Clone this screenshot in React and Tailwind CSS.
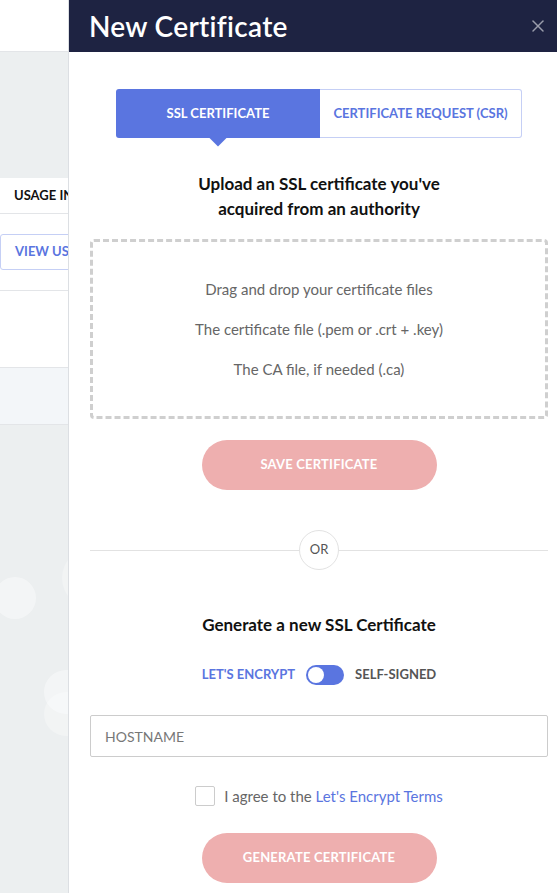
import { X } from "lucide-react";

function Background() {
  return (
    <div className="relative w-[68px] shrink-0 overflow-hidden bg-[#eceff0]">
      <div className="h-[52px] border-b border-[#e3e5e8] bg-white" />
      <div className="h-[126px]" />
      <div className="bg-white">
        <div className="flex h-[36px] items-center border-b border-[#e3e5e8] pl-[14px] text-[13px] font-bold whitespace-nowrap text-[#111]">
          USAGE INFO
        </div>
        <div className="flex h-[77px] items-center border-b border-[#e3e5e8]">
          <div className="flex h-[36px] items-center rounded-l-[3px] border border-[#c5cff5] pl-[14px] text-[13px] font-bold whitespace-nowrap text-[#5a75e0]">
            VIEW USAGE
          </div>
        </div>
        <div className="h-[77px] border-b border-[#e3e5e8]" />
      </div>
      <div className="h-[57px] border-b border-[#e3e5e8] bg-[#f3f6f9]" />
      <div className="absolute top-[577px] left-[-6px] h-[42px] w-[42px] rounded-full bg-white/40" />
      <div className="absolute top-[548px] left-[62px] h-[60px] w-[60px] rounded-full bg-white/30" />
      <div className="absolute top-[670px] left-[44px] h-[44px] w-[44px] rounded-full bg-white/40" />
      <div className="absolute top-[692px] left-[44px] h-[44px] w-[44px] rounded-full bg-white/30" />
    </div>
  );
}

function PinkButton({ children }) {
  return (
    <button className="h-[50px] w-[235px] rounded-full bg-[#eeafaf] text-[13px] font-bold tracking-[0.2px] text-white">
      {children}
    </button>
  );
}

export default function App() {
  return (
    <div
      className="flex h-[893px] w-full overflow-hidden"
      style={{ fontFamily: "Lato, 'Open Sans', sans-serif" }}
    >
      <Background />
      <div className="flex min-w-0 flex-1 flex-col border-l border-[#dcdfe3] bg-white">
        <div className="flex h-[52px] shrink-0 items-center justify-between bg-[#1e2342] pr-[9px] pl-[20px]">
          <h1 className="text-[28px] font-semibold tracking-[0.3px] text-white">New Certificate</h1>
          <X className="h-[20px] w-[20px] text-[#9a9dab]" strokeWidth={1.8} />
        </div>

        <div className="flex flex-col items-center pr-[9px] pl-[21px]">
          <div className="mt-[37px] flex h-[49px] w-[406px]">
            <div className="relative flex w-[204px] items-center justify-center rounded-l-[3px] bg-[#5a75e0] text-[13px] font-bold text-white">
              SSL CERTIFICATE
              <div className="absolute -bottom-[6px] left-1/2 h-[12px] w-[12px] -translate-x-1/2 rotate-45 bg-[#5a75e0]" />
            </div>
            <div className="flex flex-1 items-center justify-center rounded-r-[3px] border border-l-0 border-[#c5cff5] text-[13px] font-bold text-[#5a75e0]">
              CERTIFICATE REQUEST (CSR)
            </div>
          </div>

          <h2 className="mt-[33px] text-center text-[17px] leading-[25px] font-bold text-[#111]">
            Upload an SSL certificate you've
            <br />
            acquired from an authority
          </h2>

          <div className="mt-[18px] flex h-[180px] w-full flex-col items-center justify-center gap-[18px] rounded-[4px] border-[3px] border-dashed border-[#cfcfcf] text-[15px] leading-[22px] text-[#666]">
            <p>Drag and drop your certificate files</p>
            <p>The certificate file (.pem or .crt + .key)</p>
            <p>The CA file, if needed (.ca)</p>
          </div>

          <div className="mt-[21px]">
            <PinkButton>SAVE CERTIFICATE</PinkButton>
          </div>

          <div className="mt-[40px] flex w-full items-center">
            <div className="h-px flex-1 bg-[#e2e2e2]" />
            <div className="flex h-[40px] w-[40px] items-center justify-center rounded-full border border-[#e2e2e2] text-[13px] text-[#555]">
              OR
            </div>
            <div className="h-px flex-1 bg-[#e2e2e2]" />
          </div>

          <h2 className="mt-[42px] text-[17px] leading-[25px] font-bold text-[#111]">
            Generate a new SSL Certificate
          </h2>

          <div className="mt-[28px] flex items-center gap-[11px] text-[13px] font-bold">
            <span className="text-[#5a75e0]">LET'S ENCRYPT</span>
            <div className="flex h-[20px] w-[38px] items-center rounded-full bg-[#5a75e0] px-[2px]">
              <div className="h-[16px] w-[16px] rounded-full bg-white" />
            </div>
            <span className="text-[#555]">SELF-SIGNED</span>
          </div>

          <div className="mt-[30px] flex h-[42px] w-full items-center rounded-[2px] border border-[#cccccc] px-[14px] text-[14px] text-[#777]">
            HOSTNAME
          </div>

          <div className="mt-[28px] flex items-center gap-[9px] text-[15px] text-[#666]">
            <div className="h-[20px] w-[20px] rounded-[2px] border border-[#cccccc]" />
            <span>
              I agree to the <span className="text-[#5a75e0]">Let's Encrypt Terms</span>
            </span>
          </div>

          <div className="mt-[25px]">
            <PinkButton>GENERATE CERTIFICATE</PinkButton>
          </div>
        </div>
      </div>
    </div>
  );
}
